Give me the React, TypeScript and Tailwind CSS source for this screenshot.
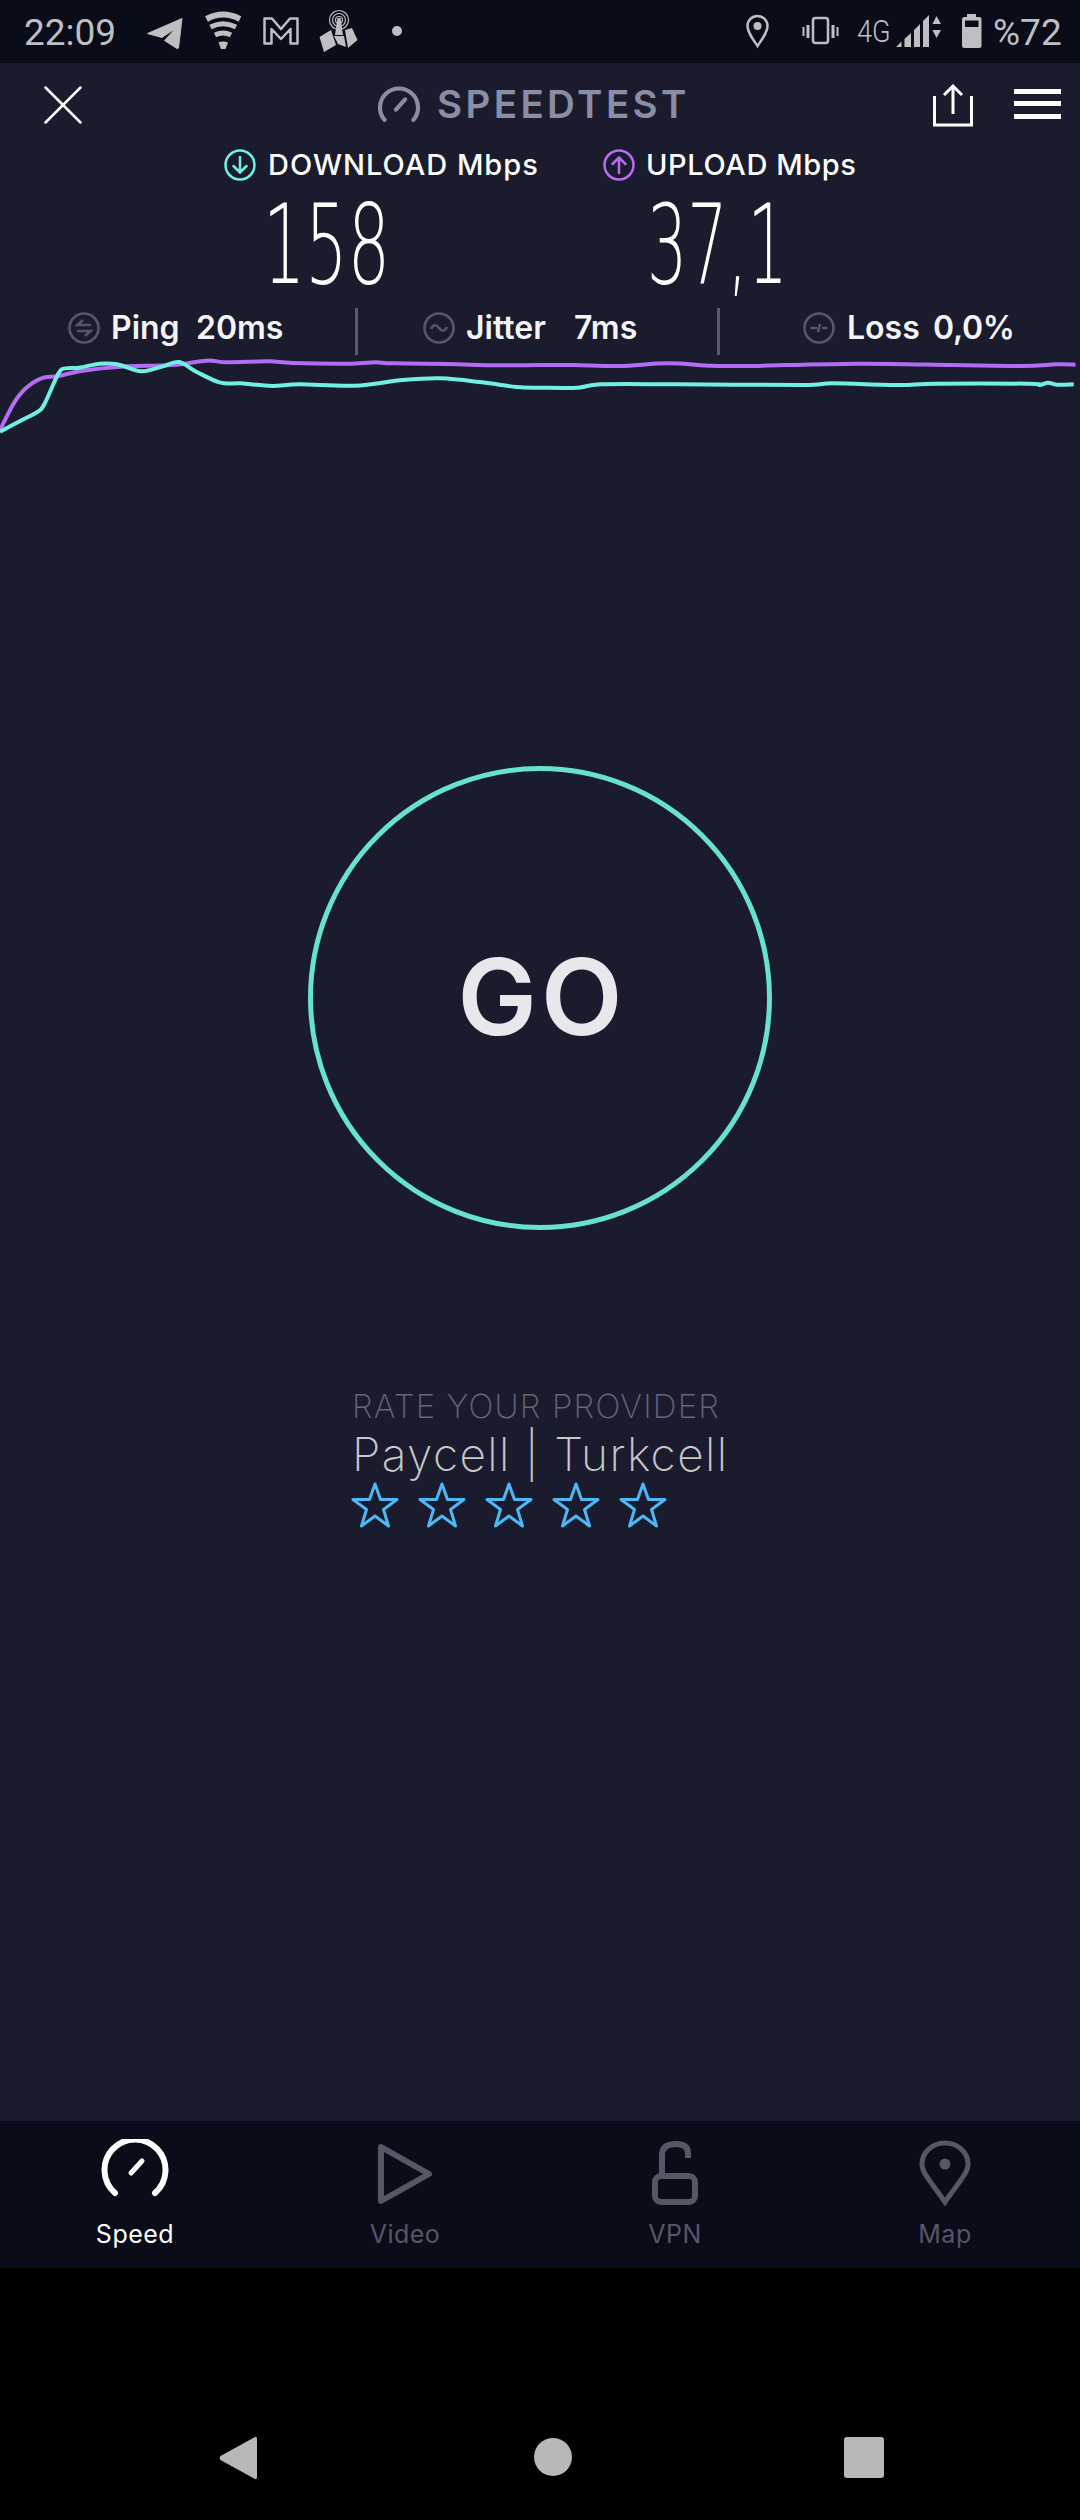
import React from "react";

const K = 2.904;
const L = [
  [0, 870], [40, 790], [75, 745], [120, 715], [170, 708], [240, 692], [350, 680], [500, 675], [600, 662], [660, 667], [780, 664], [850, 669], [1020, 671], [1090, 667], [1140, 670], [1300, 672], [1440, 676], [1568, 675],
].map(([x, y]) => [x / K, 140 + y / 3]);
const LR = [[100, 675], [230, 678], [370, 670], [500, 677], [600, 678], [920, 671], [1200, 675], [1400, 678], [1500, 673], [1555, 674]].map(([x, y]) => [540 + x / K, 140 + y / 3]);
const C = [
  [0, 875], [60, 842], [110, 815], [130, 790], [170, 700], [190, 685], [230, 683], [290, 671], [340, 673], [410, 694], [470, 680], [520, 666], [570, 695], [640, 728], [700, 730], [790, 738], [870, 733], [1030, 737], [1170, 720], [1280, 715], [1400, 727], [1500, 741], [1568, 743],
].map(([x, y]) => [x / K, 140 + y / 3]);
const CR = [[110, 743], [180, 733], [400, 733], [760, 735], [850, 730], [1040, 735], [1150, 731], [1420, 731], [1450, 735], [1475, 728], [1500, 734], [1550, 733]].map(([x, y]) => [540 + x / K, 140 + y / 3]);

function smooth(p: number[][]) {
  let d = `M${p[0][0]} ${p[0][1]}`;
  for (let i = 0; i < p.length - 1; i++) {
    const a = p[Math.max(i - 1, 0)], b = p[i], c = p[i + 1], e = p[Math.min(i + 2, p.length - 1)];
    d += `C${b[0] + (c[0] - a[0]) / 6} ${b[1] + (c[1] - a[1]) / 6} ${c[0] - (e[0] - b[0]) / 6} ${c[1] - (e[1] - b[1]) / 6} ${c[0]} ${c[1]}`;
  }
  return d;
}

const gray = "#bfbfc3";

function Bar({ x, w, className = "", children }: { x: number; w: number; className?: string; children: React.ReactNode }) {
  return (
    <svg viewBox={`${x} 0 ${w} 63`} width={w} height={63} className={`shrink-0 ${className}`} fill="none">
      {children}
    </svg>
  );
}

function StatusBar() {
  return (
    <div className="h-[63px] shrink-0 bg-[#0a0c19] flex items-center text-[#bfbfc3] font-['Roboto',sans-serif]">
      <span className="ml-[24px] w-[93px] text-[37px] leading-[63px] mt-[1px]">22:09</span>
      <Bar x={147} w={36} className="ml-[30px]">
        <path d="M182 18.500 147.500 33.500 162 37.500 176 28 164.500 40.500 177 48.500 178.500 48Z" fill={gray} stroke={gray} strokeLinejoin="round" />
      </Bar>
      <Bar x={205} w={36} className="ml-[22px]">
        <g stroke={gray} fill="none">
          <path d="M206.500 19Q223 10 240 19" strokeWidth="6" />
          <path d="M210.500 27Q223 20.500 236 27" strokeWidth="5" />
          <path d="M215 35Q223 31 231 35" strokeWidth="5" />
        </g>
        <path d="M218.500 42.500Q223 40.500 228 42.500L225.500 49H221Z" fill={gray} />
      </Bar>
      <Bar x={263} w={36} className="ml-[22px]">
        <path d="M264.500 18.500H272L281 29 290 18.500H297.500V43.500H290.500V29L281 39 271.500 29V43.500H264.500Z" stroke={gray} strokeWidth="2.500" strokeLinejoin="round" />
      </Bar>
      <Bar x={319} w={39} className="ml-[20px]">
        <g stroke={gray} strokeWidth="1.200">
          <circle cx="339" cy="20" r="9.500" />
          <circle cx="339" cy="20" r="6.500" />
          <circle cx="339" cy="20" r="3.500" />
        </g>
        <path d="M337.500 18H340.500L343 35H335Z" fill={gray} />
        <path d="M319.500 37 331 30 336 45 324 52Z M345 30 352 28 357.500 40 348 48Z M334 36 344 36 346 47 338 44Z" fill={gray} />
      </Bar>
      <span className="ml-[34px] size-[10px] rounded-full bg-[#bfbfc3] -mt-[1px]" />
      <div className="flex-1" />
      <Bar x={746} w={23}>
        <path d="M757.500 46C752 38 747.500 32 747.500 26A10 10 0 0 1 767.500 26C767.500 32 763 38 757.500 46Z" stroke={gray} strokeWidth="2.500" />
        <circle cx="757.500" cy="26" r="4" fill={gray} />
      </Bar>
      <Bar x={802} w={37} className="ml-[33px]">
        <rect x="813" y="18" width="15" height="25" rx="2.500" stroke={gray} strokeWidth="2.500" />
        <path d="M808 25V38M833 25V38" stroke={gray} strokeWidth="3" />
        <path d="M803.500 27V36M837.500 27V36" stroke={gray} strokeWidth="2" />
      </Bar>
      <span className="ml-[18px] w-[33px] text-[32px] leading-[63px] font-light scale-x-[0.85] origin-left">4G</span>
      <Bar x={896} w={45} className="ml-[6px]">
        <path d="M896 47 901.500 41.500V47Z M904.500 39 911 33V47H904.500Z M914 30 920 24V47H914Z M923 21 929 15V47H923Z" fill={gray} />
        <path d="M936.500 16 941 24H932.500Z M936.500 38 932.500 30H941Z" fill={gray} />
      </Bar>
      <Bar x={962} w={20} className="ml-[21px]">
        <path fillRule="evenodd" d="M967 14H976V17H979Q981.500 17 981.500 19.500V45.500Q981.500 48 979 48H964.500Q962 48 962 45.500V19.500Q962 17 964.500 17H967ZM965 20.500V27H978.500V20.500Z" fill={gray} />
      </Bar>
      <span className="ml-[11px] mr-[19px] w-[68px] text-[37px] leading-[63px] mt-[1px]">%72</span>
    </div>
  );
}

function Gauge({ className, stroke, sw }: { className: string; stroke: string; sw: number }) {
  return (
    <svg viewBox="0 0 40 36" className={className} fill="none" stroke={stroke} strokeWidth={sw} strokeLinecap="round">
      <path d="M6 34A18.500 18.500 0 1 1 34 34" />
      <path d="M17 24L26 14" />
    </svg>
  );
}

function Header() {
  return (
    <div className="h-[80px] flex items-center">
      <svg viewBox="0 0 38 38" className="ml-[44px] w-[38px] h-[38px] mt-[3px]" stroke="#fff" strokeWidth="2.500" strokeLinecap="round">
        <path d="M1.500 1.500 36.500 36.500M36.500 1.500 1.500 36.500" />
      </svg>
      <Gauge className="ml-[296px] w-[42px] h-[37px] mt-[1px]" stroke="#8b8ea2" sw={4} />
      <span className="ml-[17px] w-[249px] whitespace-nowrap text-[38.500px] font-semibold leading-none text-[#8b8ea2] font-['Inter',sans-serif] tracking-[3.400px] mt-[3px]">SPEEDTEST</span>
      <svg viewBox="0 0 40 44" className="ml-[247px] w-[40px] h-[44px] mt-[4px]" fill="none" stroke="#fff" strokeWidth="3">
        <path d="M1.500 13V42H38.500V13" />
        <path d="M20 31V3M11 12 20 3 29 12" />
      </svg>
      <div className="ml-[41px] w-[47px] flex flex-col gap-[7.500px] mt-[1px]">
        <div className="h-[5px] bg-white" />
        <div className="h-[5px] bg-white" />
        <div className="h-[5px] bg-white" />
      </div>
    </div>
  );
}

function Ring({ color, up }: { color: string; up?: boolean }) {
  return (
    <svg viewBox="0 0 32 32" className="w-[32px] h-[32px] shrink-0" fill="none" stroke={color} strokeWidth="2.500">
      <circle cx="16" cy="16" r="14.500" />
      <path d={up ? "M16 24V9M9.500 15 16 8.500 22.500 15" : "M16 8V23M9.500 17 16 23.500 22.500 17"} strokeLinecap="round" />
    </svg>
  );
}

function UnitRow() {
  return (
    <div className="h-[44px] flex items-center font-['Inter',sans-serif] text-[29px] font-medium tracking-[1px] text-white whitespace-nowrap">
      <div className="ml-[224px]"><Ring color="#6ff0e2" /></div>
      <span className="ml-[12px] w-[335px]">DOWNLOAD Mbps</span>
      <Ring color="#b96cf0" up />
      <span className="ml-[11px] tracking-[0.6px]">UPLOAD Mbps</span>
    </div>
  );
}

function Numbers() {
  const base = "block text-[111px] leading-[116px] font-extralight text-white font-['DejaVu_Sans',sans-serif] origin-left whitespace-nowrap";
  return (
    <div className="h-[116px] flex">
      <div className="ml-[263px] w-[384px]"><span className={`${base} scale-x-[0.6]`}>158</span></div>
      <div><span className={`${base} scale-x-[0.57]`}>37,1</span></div>
    </div>
  );
}

function StatIcon({ kind }: { kind: "ping" | "jitter" | "loss" }) {
  return (
    <svg viewBox="0 0 32 32" className="w-[32px] h-[32px] shrink-0" fill="none" stroke="#555767" strokeWidth="2.600">
      <circle cx="16" cy="16" r="14.500" />
      {kind === "ping" && <path d="M23 13H9.500L15 8M9 19H22.500L17 24" strokeWidth="2.600" />}
      {kind === "jitter" && <path d="M8 17C10.500 12 13.500 12.500 16 16S21.500 20 24 15" />}
      {kind === "loss" && <path d="M7.500 16H14M15 20 17 12M19 16H24.500" />}
    </svg>
  );
}

function Divider() {
  return <div className="w-[3px] h-[47px] bg-[#5a5c6b] shrink-0 self-start mt-[5px]" />;
}

function Stats() {
  return (
    <div className="h-[50px] mb-[5px] flex items-center font-['Inter',sans-serif] text-[32px] font-semibold text-[#f4f4f6] whitespace-nowrap">
      <div className="ml-[68px]"><StatIcon kind="ping" /></div>
      <span className="ml-[11px] w-[85px]">Ping</span>
      <span className="w-[159px]">20ms</span>
      <Divider />
      <div className="ml-[65px]"><StatIcon kind="jitter" /></div>
      <span className="ml-[11px] w-[108px]">Jitter</span>
      <span className="w-[143px]">7ms</span>
      <Divider />
      <div className="ml-[83px]"><StatIcon kind="loss" /></div>
      <span className="ml-[12px] w-[86px]">Loss</span>
      <span className="tracking-[-0.3px]">0,0%</span>
    </div>
  );
}

function Chart() {
  return (
    <svg viewBox="0 358 1080 82" className="w-[1080px] h-[82px] block" fill="none" strokeWidth="4" strokeLinecap="butt" strokeLinejoin="round">
      <path d={smooth([...L, ...LR])} stroke="#b36cf2" />
      <path d={smooth([...C, ...CR])} stroke="#6ff0e2" />
    </svg>
  );
}

function Star() {
  return (
    <svg viewBox="0 0 48 46" className="w-[48px] h-[46px] shrink-0" fill="none" stroke="#4db8f5" strokeWidth="3" strokeLinejoin="round">
      <path d="M24 2 29.500 17.500H46L32.500 27.500 37.500 44 24 34 10.500 44 15.500 27.500 2 17.500H18.500Z" />
    </svg>
  );
}

function Rate() {
  return (
    <div className="ml-[352px] mt-[159px] font-['Inter',sans-serif] whitespace-nowrap">
      <div className="h-[34px] leading-[34px] text-[33px] font-extralight tracking-[1.200px] text-[#64667a]">RATE YOUR PROVIDER</div>
      <div className="h-[62px] leading-[62px] text-[46px] font-extralight tracking-[1.400px] text-[#c8c8cc]">Paycell | Turkcell</div>
      <div className="flex gap-[19px] -ml-[1px] -mt-[3px]">
        <Star /><Star /><Star /><Star /><Star />
      </div>
    </div>
  );
}

function Tab({ label, active, children }: { label: string; active?: boolean; children: React.ReactNode }) {
  return (
    <div className="flex-1 flex flex-col items-center">
      <div className="h-[92px] flex items-end justify-center">{children}</div>
      <span className={`mt-[6px] text-[25px] tracking-[0.5px] leading-[30px] font-['Inter',sans-serif] ${active ? "text-white" : "text-[#555767]"}`}>{label}</span>
    </div>
  );
}

function TabBar() {
  return (
    <div className="h-[147px] shrink-0 bg-[#0a0c19] flex">
      <Tab label="Speed" active>
        <svg viewBox="0 0 68 58" className="w-[68px] h-[58px] mb-[16px]" fill="none" stroke="#fff" strokeWidth="6" strokeLinecap="round">
          <path d="M14 54A30.500 30.500 0 1 1 54 54" />
          <path d="M30 34 41 22" strokeWidth="5" />
        </svg>
      </Tab>
      <Tab label="Video">
        <svg viewBox="0 0 54 60" className="w-[54px] h-[60px] mb-[9px]" fill="none" stroke="#555767" strokeWidth="6" strokeLinejoin="round">
          <path d="M3 3V57L51 30Z" />
        </svg>
      </Tab>
      <Tab label="VPN">
        <svg viewBox="0 0 46 64" className="w-[46px] h-[64px] mb-[8px]" fill="none" stroke="#555767" strokeWidth="6">
          <path d="M10 35V14Q10 3 24 3Q36 3 36 12V17" />
          <rect x="3" y="35" width="40" height="26" rx="6" />
        </svg>
      </Tab>
      <Tab label="Map">
        <svg viewBox="0 0 52 66" className="w-[52px] h-[66px] mb-[7px]" fill="none" stroke="#555767" strokeWidth="5">
          <path d="M26 62C14 44 3 34 3 24A23 21 0 0 1 49 24C49 34 38 44 26 62Z" />
          <circle cx="26" cy="24" r="5.500" fill="#555767" stroke="none" />
        </svg>
      </Tab>
    </div>
  );
}

function NavBar() {
  return (
    <div className="flex-1 bg-black flex items-start pt-[168px]">
      <svg viewBox="0 0 38 44" className="ml-[219px] w-[38px] h-[44px]" fill="#b8b8b8">
        <path d="M36 1Q38 0 38 3V41Q38 44 36 43L1.500 24Q0 22 1.500 20Z" />
      </svg>
      <div className="ml-[277px] mt-[2px] size-[38px] rounded-full bg-[#b8b8b8]" />
      <div className="ml-[272px] mt-[1px] w-[40px] h-[41px] rounded-[3px] bg-[#b8b8b8]" />
    </div>
  );
}

export default function App() {
  return (
    <div className="w-[1080px] h-[2520px] flex flex-col bg-black overflow-hidden">
      <StatusBar />
      <main className="h-[2058px] shrink-0 bg-[#1a1c2d]">
        <Header />
        <UnitRow />
        <Numbers />
        <Stats />
        <Chart />
        <button className="block mx-auto mt-[326px] size-[464px] pb-[3px] pl-[4px] rounded-full border-[5px] border-[#67e2d0] text-[#e8e8ec] text-[106px] font-semibold leading-none font-['Inter',sans-serif] tracking-[4px]">GO</button>
        <Rate />
      </main>
      <TabBar />
      <NavBar />
    </div>
  );
}
